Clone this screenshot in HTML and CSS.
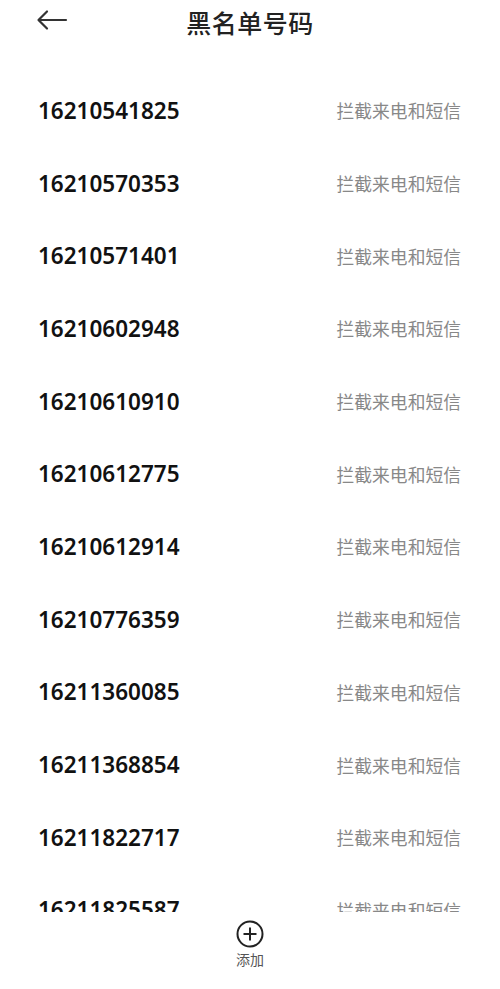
FILE: index.html
```html
<!DOCTYPE html>
<html lang="zh-CN">
<head>
    <meta charset="UTF-8">
    <meta name="viewport" content="width=device-width, initial-scale=1.0">
    <title>黑名单号码</title>
    <link rel="stylesheet" href="styles.css">
</head>
<body>

    <div class="page">
        <div class="top-bar">
            <span class="back">
                <svg width="32" height="22" viewBox="0 0 32 22">
                    <path d="M30 11H3M11 2.5L2.5 11L11 19.5" fill="none" stroke="#333" stroke-width="2.2" stroke-linecap="round" stroke-linejoin="round"/>
                </svg>
            </span>
            <h1>黑名单号码</h1>
        </div>

        <div class="number-list">
            <div class="row"><span class="num">16210541825</span><span class="mode">拦截来电和短信</span></div>
            <div class="row"><span class="num">16210570353</span><span class="mode">拦截来电和短信</span></div>
            <div class="row"><span class="num">16210571401</span><span class="mode">拦截来电和短信</span></div>
            <div class="row"><span class="num">16210602948</span><span class="mode">拦截来电和短信</span></div>
            <div class="row"><span class="num">16210610910</span><span class="mode">拦截来电和短信</span></div>
            <div class="row"><span class="num">16210612775</span><span class="mode">拦截来电和短信</span></div>
            <div class="row"><span class="num">16210612914</span><span class="mode">拦截来电和短信</span></div>
            <div class="row"><span class="num">16210776359</span><span class="mode">拦截来电和短信</span></div>
            <div class="row"><span class="num">16211360085</span><span class="mode">拦截来电和短信</span></div>
            <div class="row"><span class="num">16211368854</span><span class="mode">拦截来电和短信</span></div>
            <div class="row"><span class="num">16211822717</span><span class="mode">拦截来电和短信</span></div>
            <div class="row"><span class="num">16211825587</span><span class="mode">拦截来电和短信</span></div>
        </div>

        <div class="bottom-bar">
            <svg width="28" height="28" viewBox="0 0 28 28">
                <circle cx="14" cy="14" r="12.5" fill="none" stroke="#222" stroke-width="2"/>
                <path d="M14 7.5V20.5M7.5 14H20.5" stroke="#222" stroke-width="2"/>
            </svg>
            <span class="add-label">添加</span>
        </div>
    </div>

</body>
</html>
```

FILE: styles.css
```css
body {
    margin: 0;
    background: #fff;
    font-family: "Noto Sans", "Noto Sans CJK SC", sans-serif;
    color: #111;
}
.page {
    display: flex;
    flex-direction: column;
    height: 989px;
}
.top-bar {
    height: 74px;
    display: flex;
    align-items: flex-start;
    justify-content: center;
    position: relative;
}
.top-bar .back {
    position: absolute;
    left: 36px;
    top: 9px;
}
.top-bar h1 {
    margin: 0;
    margin-top: 4px;
    font-size: 25px;
    font-weight: 500;
    color: #222;
    letter-spacing: 0.5px;
    line-height: 36px;
    font-family: "Noto Sans CJK SC", sans-serif;
}
.number-list {
    height: 838px;
    overflow: hidden;
}
.row {
    height: 72.7px;
    display: flex;
    align-items: center;
    justify-content: space-between;
    padding: 0 39px 0 38px;
}
.row .num {
    font-size: 22.5px;
    font-weight: 600;
    color: #111;
}
.row .mode {
    font-size: 17.8px;
    color: #888;
    font-family: "Noto Sans CJK SC", sans-serif;
}
.bottom-bar {
    flex: 1;
    display: flex;
    flex-direction: column;
    align-items: center;
    padding-top: 8px;
}
.add-label {
    font-size: 14px;
    color: #555;
    margin-top: 1px;
    font-family: "Noto Sans CJK SC", sans-serif;
}
```
